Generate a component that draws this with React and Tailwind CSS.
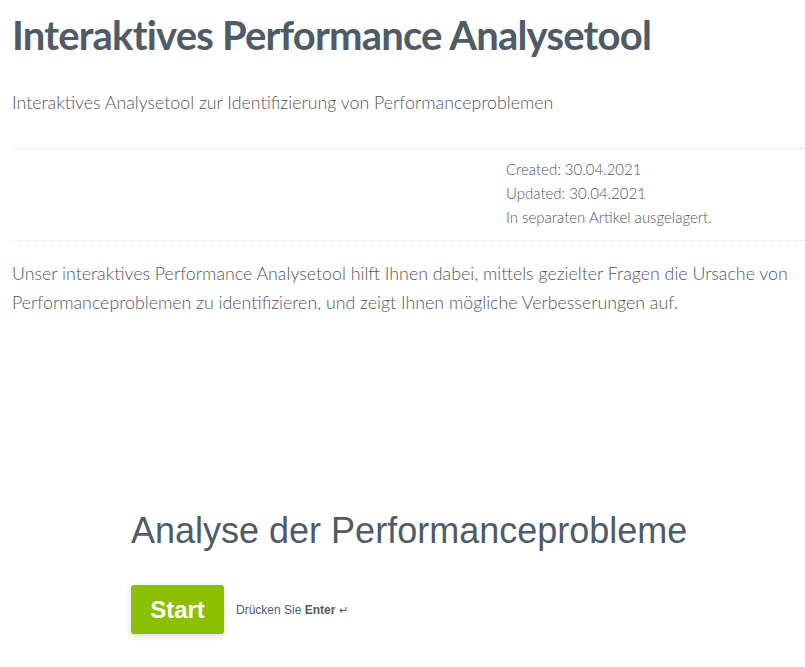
export default function App() {
  return (
    <div className="w-[805px] min-h-[667px] bg-white text-[#55555f]">
      <div className="pl-[12px] pr-[2px] font-['Lato','Open_Sans',sans-serif]">
        <h1 className="pt-[12px] text-[40px] leading-[46px] font-bold text-[#4f5b66] tracking-[-0.8px]">
          Interaktives Performance Analysetool
        </h1>
        <p className="mt-[31px] text-[17.8px] leading-[26px] font-light">
          Interaktives Analysetool zur Identifizierung von Performanceproblemen
        </p>
        <div className="mt-[33px] ml-[2px] border-t border-dotted border-[#d9dde0] border-b pt-[8px] pb-[11px] grid grid-cols-[492px_1fr]">
          <div />
          <div className="text-[15px] leading-[24px] font-light">
            <div>Created: 30.04.2021</div>
            <div>Updated: 30.04.2021</div>
            <div>In separaten Artikel ausgelagert.</div>
          </div>
        </div>
        <p className="mt-[18px] text-[17.8px] leading-[29px] font-light">
          Unser interaktives Performance Analysetool hilft Ihnen dabei, mittels gezielter Fragen die Ursache von Performanceproblemen zu identifizieren, und zeigt Ihnen mögliche Verbesserungen auf.
        </p>
      </div>
      <div className="mt-[193px] pl-[131px] font-['Liberation_Sans',Arial,sans-serif]">
        <h2 className="text-[36px] leading-[42px] text-[#4f5b66]">Analyse der Performanceprobleme</h2>
        <div className="mt-[33px] flex items-center gap-[12px]">
          <button className="w-[93px] h-[49px] rounded-[3px] bg-[#8bbf00] text-white text-[24px] font-bold shadow-[0_2px_6px_rgba(0,0,0,0.15)]">
            Start
          </button>
          <span className="text-[12px] text-[#4f5b66]">
            Drücken Sie <b>Enter</b> <span className="text-[11px]">↵</span>
          </span>
        </div>
      </div>
    </div>
  );
}
